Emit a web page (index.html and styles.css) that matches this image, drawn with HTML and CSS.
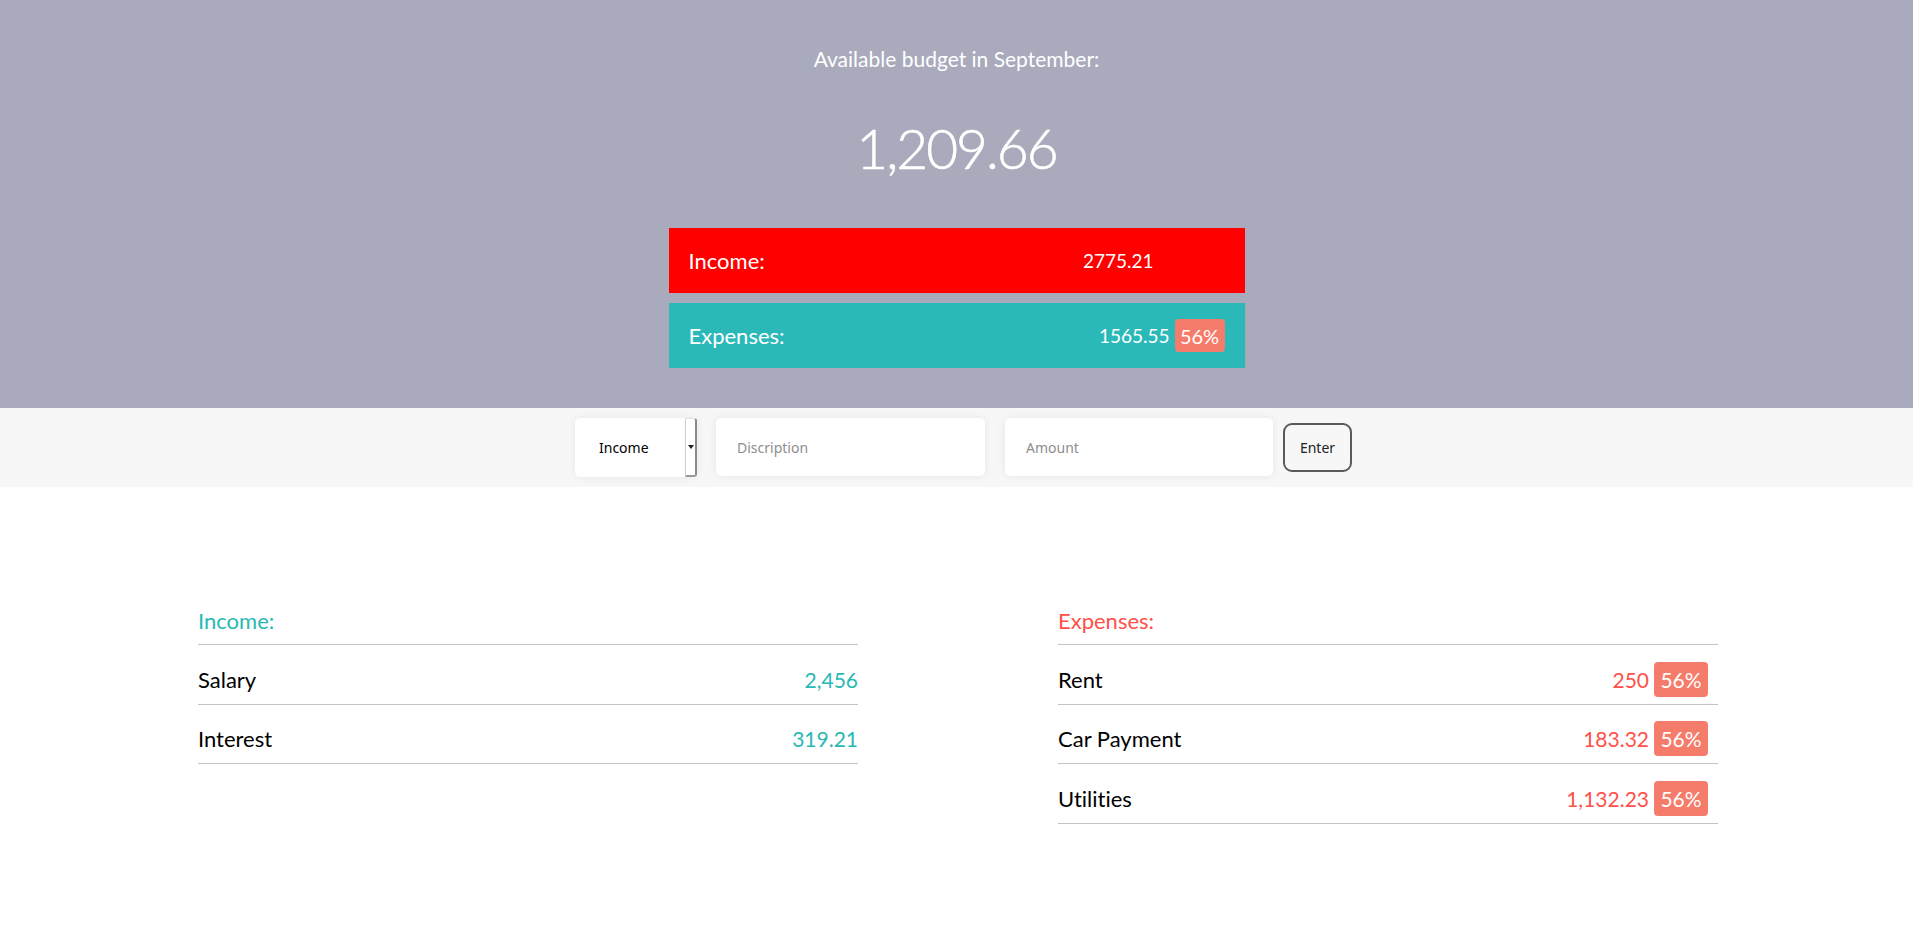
FILE: index.html
```html
<!DOCTYPE html>
<html>
<head>
<meta charset="utf-8">
<link rel="stylesheet" href="styles.css">
</head>
<body>
<header class="top">
  <div class="budget-title">Available budget in September:</div>
  <div class="budget-value">1,209.66</div>
  <div class="summary summary--income">
    <span class="summary-label">Income:</span>
    <span class="summary-value summary-value--income">2775.21</span>
  </div>
  <div class="summary summary--expenses">
    <span class="summary-label">Expenses:</span>
    <span class="summary-value">1565.55</span>
    <span class="badge badge--bar">56%</span>
  </div>
</header>
<section class="add">
  <div class="add-row">
    <div class="select">
      <span class="select-text">Income</span>
      <span class="select-arrow"><span class="tri"></span></span>
    </div>
    <div class="field field--desc">Discription</div>
    <div class="field field--amount">Amount</div>
    <div class="btn">Enter</div>
  </div>
</section>
<main class="lists">
  <div class="list">
    <h2 class="list-title list-title--inc">Income:</h2>
    <div class="item"><span class="item-name">Salary</span><span class="item-value inc">2,456</span></div>
    <div class="item"><span class="item-name">Interest</span><span class="item-value inc">319.21</span></div>
  </div>
  <div class="list">
    <h2 class="list-title list-title--exp">Expenses:</h2>
    <div class="item"><span class="item-name">Rent</span><span class="item-value exp">250</span><span class="badge badge--row">56%</span></div>
    <div class="item"><span class="item-name">Car Payment</span><span class="item-value exp">183.32</span><span class="badge badge--row">56%</span></div>
    <div class="item"><span class="item-name">Utilities</span><span class="item-value exp">1,132.23</span><span class="badge badge--row">56%</span></div>
  </div>
</main>
</body>
</html>
```
FILE: styles.css
```css
* { box-sizing: border-box; }
body {
  margin: 0;
  font-family: "Lato", "Open Sans", sans-serif;
  font-variant-ligatures: none;
  color: #000;
  background: #fff;
}
.top {
  height: 408px;
  background: #a9aabc;
  color: #fff;
  display: flex;
  flex-direction: column;
  align-items: center;
  padding-top: 45px;
}
.budget-title {
  font-size: 21px;
  line-height: 28px;
}
.budget-value {
  font-size: 55px;
  font-weight: 300;
  line-height: 70px;
  margin-top: 40px;
  letter-spacing: -2px;
  -webkit-text-stroke: 0.6px #fff;
}
.summary {
  width: 576px;
  height: 65px;
  display: flex;
  align-items: center;
  padding: 0 20px;
}
.summary--income {
  background: #ff0000;
  margin-top: 45px;
}
.summary--expenses {
  background: #2ab9b8;
  margin-top: 10px;
}
.summary-label {
  font-size: 22px;
  flex: 1;
}
.summary-value {
  font-size: 19px;
}
.summary-value--income {
  margin-right: 71px;
}
.badge {
  background: #f57c6a;
  color: #fff;
  border-radius: 4px;
  display: inline-flex;
  align-items: center;
  justify-content: center;
}
.badge--bar {
  width: 50px;
  height: 33px;
  margin-left: 5px;
  font-size: 20px;
}
.add {
  height: 79px;
  background: #f7f7f7;
  padding-top: 10px;
}
.add-row {
  display: flex;
  justify-content: center;
  align-items: flex-start;
  padding-left: 14px;
}
.select {
  width: 122px;
  height: 59px;
  background: #fff;
  border-radius: 5px;
  box-shadow: 0 0 10px rgba(0,0,0,0.07);
  display: flex;
  align-items: center;
  font-size: 14px;
  font-family: "Noto Sans", sans-serif;
}
.select-text {
  flex: 1;
  padding-left: 24px;
}
.select-arrow {
  width: 12px;
  height: 59px;
  border-left: 1px solid #d0d0d0;
  border-right: 2px solid #8a8a8a;
  border-top: 1px solid #e2e2e2;
  border-bottom: 2px solid #9a9a9a;
  border-radius: 0 3px 3px 0;
  display: flex;
  align-items: center;
  justify-content: center;
}
.tri {
  width: 0;
  height: 0;
  border-left: 3px solid transparent;
  border-right: 3px solid transparent;
  border-top: 4px solid #222;
}
.field {
  height: 58px;
  background: #fff;
  border-radius: 5px;
  box-shadow: 0 0 10px rgba(0,0,0,0.07);
  display: flex;
  align-items: center;
  padding-left: 21px;
  color: #8e8e8e;
  font-size: 14px;
  font-family: "Noto Sans", sans-serif;
}
.field--desc {
  width: 269px;
  margin-left: 19px;
}
.field--amount {
  width: 268px;
  margin-left: 20px;
}
.btn {
  width: 69px;
  height: 49px;
  margin-left: 10px;
  margin-top: 5px;
  border: 2px solid #5a5a5a;
  border-radius: 9px;
  display: flex;
  align-items: center;
  justify-content: center;
  font-size: 14px;
  font-family: "Noto Sans", sans-serif;
  color: #222;
}
.lists {
  display: flex;
  justify-content: center;
  gap: 200px;
  padding-top: 119px;
  padding-left: 3px;
}
.list {
  width: 660px;
}
.list-title {
  margin: 0;
  font-size: 22px;
  font-weight: 400;
  line-height: 30px;
  padding-bottom: 8px;
  border-bottom: 1px solid #c4c4c4;
}
.list-title--inc { color: #28b9b5; }
.list-title--exp { color: #ff5049; }
.item {
  height: 59.5px;
  display: flex;
  align-items: center;
  border-bottom: 1px solid #c4c4c4;
  font-size: 21px;
  padding-top: 10px;
}
.item-name { flex: 1; font-size: 22px; }
.inc { color: #28b9b5; }
.exp { color: #ff5049; }
.badge--row {
  width: 54px;
  height: 35px;
  margin-left: 5px;
  margin-right: 10px;
  font-size: 21px;
}
```
